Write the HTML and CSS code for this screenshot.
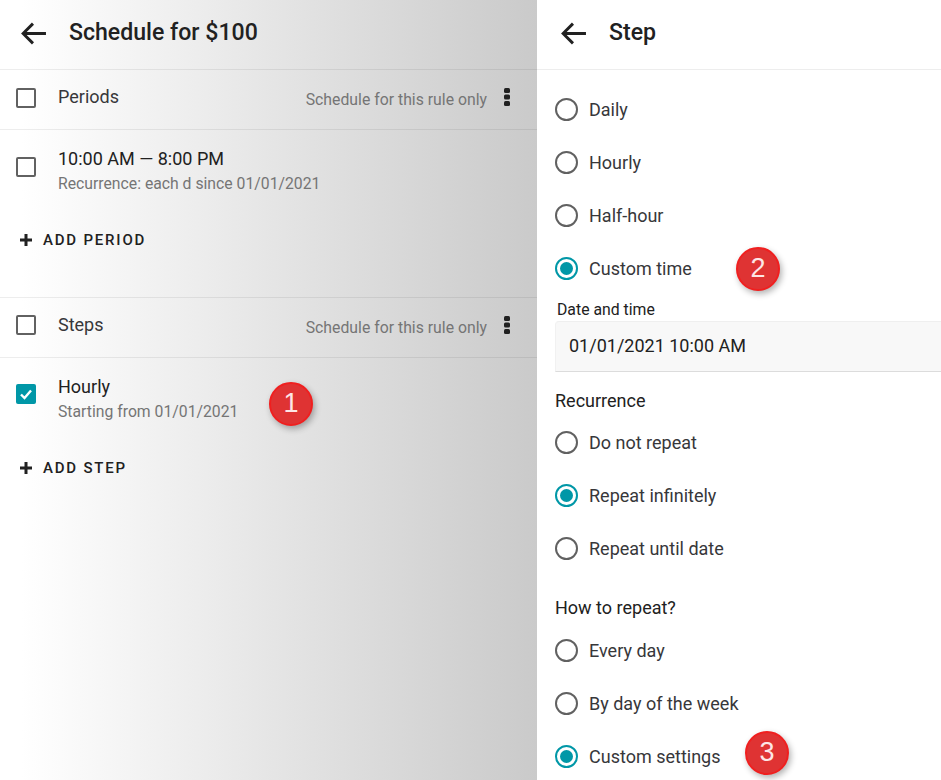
FILE: index.html
```html
<!DOCTYPE html>
<html lang="en">
<head>
<meta charset="utf-8">
<title>Schedule</title>
<link rel="stylesheet" href="styles.css">
</head>
<body>
<div class="page">
  <section class="left">
    <header class="header">
      <svg class="back" viewBox="0 0 26 24"><path d="M25 12H3M12.500 2.500 3 12l9.500 9.500" fill="none" stroke="#212121" stroke-width="2.800"/></svg>
      <h1 class="title">Schedule for $100</h1>
    </header>
    <div class="group-row">
      <span class="check"></span>
      <span class="group-name">Periods</span>
      <span class="group-note">Schedule for this rule only</span>
      <svg class="more" viewBox="0 0 6 18"><rect x="0" y="0" width="6" height="5" rx="1.500"/><rect x="0" y="6.500" width="6" height="5" rx="1.500"/><rect x="0" y="13" width="6" height="5" rx="1.500"/></svg>
    </div>
    <div class="item item-period">
      <span class="check item-check"></span>
      <div class="item-text text-period">
        <div class="item-title">10:00 AM — 8:00 PM</div>
        <div class="item-sub">Recurrence: each d since 01/01/2021</div>
      </div>
    </div>
    <div class="add add-period"><svg class="plus" viewBox="0 0 12 12"><path d="M6 0v12M0 6h12" stroke="#212121" stroke-width="3"/></svg>ADD PERIOD</div>
    <div class="group-row group-steps">
      <span class="check"></span>
      <span class="group-name">Steps</span>
      <span class="group-note">Schedule for this rule only</span>
      <svg class="more" viewBox="0 0 6 18"><rect x="0" y="0" width="6" height="5" rx="1.500"/><rect x="0" y="6.500" width="6" height="5" rx="1.500"/><rect x="0" y="13" width="6" height="5" rx="1.500"/></svg>
    </div>
    <div class="item item-step">
      <span class="check checked item-check"><svg viewBox="0 0 20 20"><path d="M5 10.500 8.500 14 15 6.500" fill="none" stroke="#fff" stroke-width="2.400"/></svg></span>
      <div class="item-text text-step">
        <div class="item-title">Hourly</div>
        <div class="item-sub">Starting from 01/01/2021</div>
      </div>
    </div>
    <div class="add add-step"><svg class="plus" viewBox="0 0 12 12"><path d="M6 0v12M0 6h12" stroke="#212121" stroke-width="3"/></svg>ADD STEP</div>
    <span class="badge badge-1">1</span>
  </section>
  <section class="right">
    <header class="header header-right">
      <svg class="back" viewBox="0 0 26 24"><path d="M25 12H3M12.500 2.500 3 12l9.500 9.500" fill="none" stroke="#212121" stroke-width="2.800"/></svg>
      <h1 class="title">Step</h1>
    </header>
    <div class="form">
      <div class="radio-group">
        <div class="radio-row"><span class="radio"></span>Daily</div>
        <div class="radio-row"><span class="radio"></span>Hourly</div>
        <div class="radio-row"><span class="radio"></span>Half-hour</div>
        <div class="radio-row"><span class="radio on"></span>Custom time</div>
      </div>
      <div class="field-label">Date and time</div>
      <div class="field">01/01/2021 10:00 AM</div>
      <div class="section-label recurrence">Recurrence</div>
      <div class="radio-group">
        <div class="radio-row"><span class="radio"></span>Do not repeat</div>
        <div class="radio-row"><span class="radio on"></span>Repeat infinitely</div>
        <div class="radio-row"><span class="radio"></span>Repeat until date</div>
      </div>
      <div class="section-label how">How to repeat?</div>
      <div class="radio-group">
        <div class="radio-row"><span class="radio"></span>Every day</div>
        <div class="radio-row"><span class="radio"></span>By day of the week</div>
        <div class="radio-row"><span class="radio on"></span>Custom settings</div>
      </div>
    </div>
    <span class="badge badge-2">2</span>
    <span class="badge badge-3">3</span>
  </section>
</div>
</body>
</html>
```

FILE: styles.css
```css
* { box-sizing: border-box; }
html, body { margin: 0; padding: 0; }
body {
  width: 941px;
  height: 780px;
  overflow: hidden;
  background: #fff;
  color: #212121;
  font-family: Roboto, "Liberation Sans", sans-serif;
}
.page { display: flex; width: 941px; height: 780px; }
.left {
  position: relative;
  width: 537px;
  flex: none;
  height: 780px;
  background: linear-gradient(to right, #ffffff 0%, #ffffff 4%, #cacaca 100%);
}
.right {
  position: relative;
  width: 404px;
  flex: none;
  height: 780px;
  overflow: hidden;
  background: #fff;
}
.header {
  display: flex;
  align-items: center;
  height: 70px;
  padding: 0 0 3px 20px;
  border-bottom: 1px solid rgba(0, 0, 0, 0.07);
}
.header-right { padding-left: 23px; }
.back { width: 27px; height: 25px; flex: none; }
.title {
  margin: 0 0 0 22px;
  font-size: 23.100px;
  font-weight: 500;
  line-height: 28px;
  color: #212121;
}
.group-row {
  display: flex;
  align-items: center;
  height: 60px;
  padding: 0 27px 0 16px;
  border-bottom: 1px solid rgba(0, 0, 0, 0.07);
}
.group-steps {
  height: 61px;
  border-top: 1px solid rgba(0, 0, 0, 0.07);
}
.check {
  display: block;
  width: 20px;
  height: 20px;
  flex: none;
  margin-bottom: 3px;
  border: 2px solid #616161;
  border-radius: 2px;
}
.group-steps .check { margin-bottom: 5px; }
.item-check { margin-bottom: 0; }
.check.checked { border: 0; background: #0097a7; }
.check svg { display: block; width: 20px; height: 20px; }
.group-name { margin-left: 22px; margin-top: -6px; font-size: 18px; line-height: 24px; color: #37373a; }
.group-note { margin-left: auto; font-size: 15.800px; line-height: 20px; color: #757575; }
.more { width: 6px; height: 18px; margin-left: 17px; margin-top: -5px; fill: #212121; }
.item { display: flex; align-items: center; padding-left: 16px; }
.item-period { height: 73px; }
.item-step { height: 72px; }
.item-text { margin-left: 22px; }
.text-period { padding-top: 9px; }
.text-step { padding-top: 10px; }
.item-title { font-size: 18px; line-height: 24px; color: #212121; }
.item-sub { margin-top: 1px; font-size: 15.750px; line-height: 24px; color: #757575; }
.add {
  display: flex;
  align-items: center;
  height: 22px;
  padding-left: 20px;
  font-size: 15px;
  font-weight: 500;
  letter-spacing: 1.800px;
  color: #212121;
}
.plus { width: 12px; height: 12px; margin-right: 11px; flex: none; }
.add-period { margin-top: 26px; margin-bottom: 46px; }
.add-step { margin-top: 27px; }
.form { padding: 13px 0 0 18px; }
.radio-row {
  display: flex;
  align-items: center;
  height: 53px;
  font-size: 18px;
  color: #37373a;
}
.radio {
  display: block;
  position: relative;
  width: 23px;
  height: 23px;
  flex: none;
  margin-right: 11px;
  border: 2px solid #616161;
  border-radius: 50%;
}
.radio.on { border-color: #0097a7; }
.radio.on::after {
  content: "";
  position: absolute;
  left: 3px;
  top: 3px;
  width: 13px;
  height: 13px;
  border-radius: 50%;
  background: #0097a7;
}
.field-label {
  margin: 5px 0 0 2px;
  font-size: 15.800px;
  line-height: 20px;
  color: #212121;
}
.field {
  display: flex;
  align-items: center;
  height: 51px;
  margin: 1px 0 0 0;
  padding: 0 0 2px 13px;
  border-top: 1px solid #efefef;
  border-left: 1px solid #f1f1f1;
  border-radius: 4px 0 0 0;
  border-bottom: 1px solid #dcdcdc;
  background: #f8f8f8;
  font-size: 18px;
  color: #212121;
}
.section-label { font-size: 18px; line-height: 24px; color: #212121; }
.recurrence { margin-top: 17px; margin-bottom: 3px; }
.how { margin-top: 21px; margin-bottom: 4px; }
.badge {
  position: absolute;
  display: flex;
  align-items: center;
  justify-content: center;
  width: 44px;
  height: 44px;
  padding-bottom: 2px;
  border: 2px solid #f01f1f;
  border-radius: 50%;
  background: #df3333;
  box-shadow: 2px 3px 6px rgba(0, 0, 0, 0.3);
  color: #fde6e6;
  font-family: "Liberation Sans", Arial, sans-serif;
  font-size: 27px;
}
.badge-1 { left: 269px; top: 382px; }
.badge-2 { left: 199px; top: 247px; }
.badge-3 { left: 208px; top: 731px; }
```
